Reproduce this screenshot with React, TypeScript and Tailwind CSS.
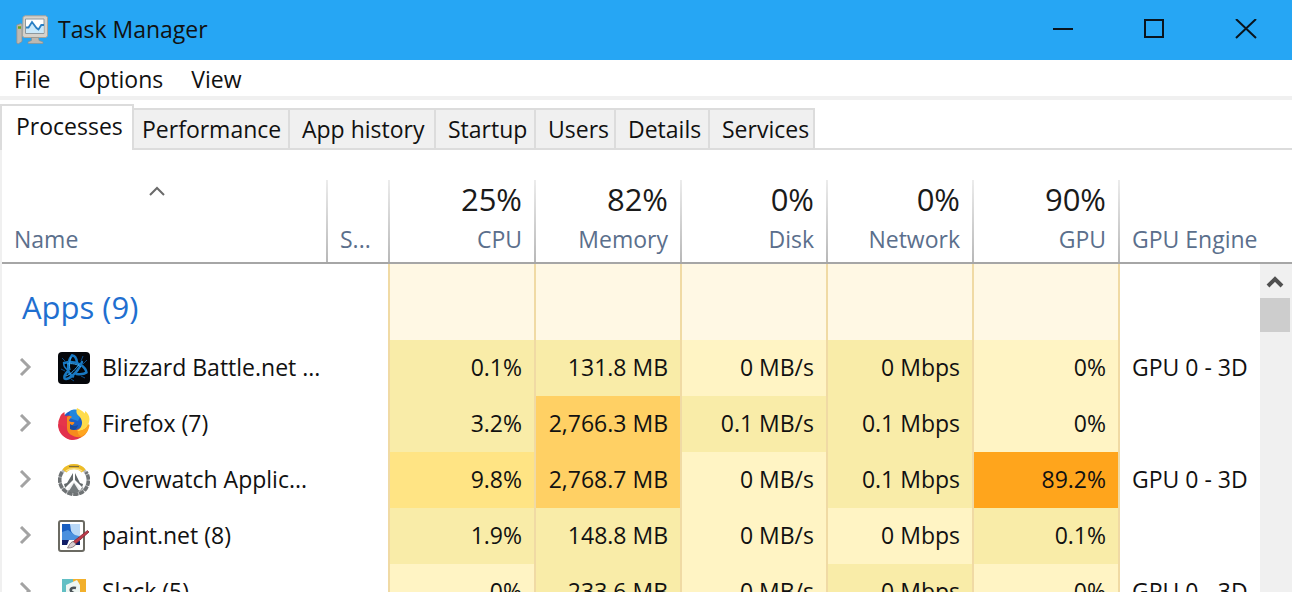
import { useState } from 'react';
import type { ReactNode } from 'react';
import clsx from 'clsx';

type Heat = 'low' | 'mild' | 'warm' | 'hot' | 'max';

type Cell = [string, Heat];

interface Process {
  name: string;
  icon: ReactNode;
  cells: Cell[];
  engine: string;
}

const HEAT: Record<Heat, string> = {
  low: 'bg-[#fff4c4]',
  mild: 'bg-[#f9eca8]',
  warm: 'bg-[#ffe484]',
  hot: 'bg-[#ffd064]',
  max: 'bg-[#ffa51c]',
};

const MENU = ['File', 'Options', 'View'];

const TABS = [
  { label: 'Performance', width: 'w-[156px]' },
  { label: 'App history', width: 'w-[146px]' },
  { label: 'Startup', width: 'w-[100px]' },
  { label: 'Users', width: 'w-[80px]' },
  { label: 'Details', width: 'w-[94px]' },
  { label: 'Services', width: 'w-[105px]' },
];

const METRICS = [
  { label: 'CPU', total: '25%' },
  { label: 'Memory', total: '82%' },
  { label: 'Disk', total: '0%' },
  { label: 'Network', total: '0%' },
  { label: 'GPU', total: '90%' },
];

function TaskManagerIcon() {
  return (
    <svg width="32" height="30" viewBox="0 0 32 30" aria-hidden="true">
      <path d="M.8 10 5 8.500l1 1v17L2 29l-1.200-1z" fill="#bdb9b2" stroke="#8f8f8f" strokeWidth=".8" />
      <path d="M2 12.500h3" stroke="#6fa51d" strokeWidth="2.500" />
      <path d="M7 2 9 .8h21l1.500 1.500V21L30 22.500H8L6.500 21z" fill="#d6d2cb" stroke="#a5a29b" />
      <path d="M9.500 4h18.500v14.500H9.500z" fill="#fff" stroke="#8d989e" />
      <path d="M10 13l3-.5 3-6 4 6 2.500 2 3-4.500 2 0v8H10z" fill="#c9e8fa" />
      <path d="M10 12.500h2.500L16 7l4.500 6 2 1.500 2.800-4.500H28" fill="none" stroke="#2a7fc4" strokeWidth="1.800" />
      <path d="M15.500 22.500h7l.5 3 4 1.500v1.500H12v-1.500l3.500-1.500z" fill="#bcb8b1" stroke="#908d87" strokeWidth=".6" />
    </svg>
  );
}

function BattleNetIcon() {
  return (
    <svg width="32" height="32" viewBox="0 0 32 32" aria-hidden="true">
      <rect width="32" height="32" rx="4" fill="#04060a" />
      <g fill="none" stroke="#1878c2" strokeLinejoin="round" strokeLinecap="round">
        <path d="M14 3.500c-2.500 3-4 9-4 13 0 3 2 6 5 8" strokeWidth="2.500" />
        <path d="M14 3.500c2.500 0 4.500 3 5 7" strokeWidth="2.500" />
        <path d="M6 11c5-1.500 12-1 16.500 1.500 3 2 5.500 5 6 8-2 1.500-6 2-10 1.500" strokeWidth="2.500" />
        <path d="M24 10c-2 5-5 10-10 14-2.500 2-6 3.500-7.500 2.500-.5-2 1-5 3.500-7.500" strokeWidth="2.500" />
        <path d="M6 11c-1 2.500 1 5 4 7.500" strokeWidth="1.500" />
      </g>
      <path d="M13 5c-1.500 4-2 9-1 13M9 12c5-1 10 0 14 3M8 24c5-2 10-7 13-12" fill="none" stroke="#38a5ee" />
      <path d="M25 4l-2 5M29 8l-4 4M3 17l4 2M27 26l-4-2M16 29l-3-2M4 6l3 3" stroke="#0c4f8c" />
    </svg>
  );
}

function FirefoxIcon() {
  return (
    <svg width="32" height="32" viewBox="0 0 32 32" aria-hidden="true">
      <circle cx="17" cy="15" r="13" fill="#1b5fc4" />
      <path d="M12 3c5-3 11-1 12 2l-4 8-9-3z" fill="#1f86dd" />
      <path d="M2 9c1-3 3-4 4.500-5 0 2 0 3 1 4 2-1 4-.5 6 .5-2 1.500-3 3-2 5 1 .8 3 .5 4 1-1 2.500-3 3-3.500 5 1.500 3 6 3.500 9 1 1 4-1 10-6 11C6 32-1 22 .5 13z" fill="#e5354a" />
      <path d="M9 9c2-1.500 4-1 5 0-1.500 1-3 2-3 4 1.500 1.500 4 .5 5.500 1.500-1 3-4 2.500-4 5 2 4 8 3 11-.5 2-3 1.500-7-1-10 6 1 9 8 7 14-3 7-11 9-16 7C11 28 9 24 9 20z" fill="#f58a1d" />
      <path d="M0 16c0 9 6 15 14 16 4 0 7-1 9-3-7 1-14-3-15-10z" fill="#e2304c" />
      <path d="M12 16c3 2 5 3 8 1-1 5-5 6-8 4z" fill="#174a9e" />
      <path d="M19 0c-1 3-1 6 2 8 3 3 4 7 2 11-1 2-3 3-4 4 5 0 9-2 11-6 3-7 1-11-3-14 0 1 0 2-.5 2.500C25 3 22 2 19 0z" fill="#ffdc4c" />
      <path d="M30.500 16c-2 5-6 7-11 7 0 3 2 5 4 5 5-2 7.500-6 8-11z" fill="#ffa51f" />
    </svg>
  );
}

function OverwatchIcon() {
  return (
    <svg width="32" height="32" viewBox="0 0 32 32" fill="none" aria-hidden="true">
      <circle cx="16" cy="16" r="14" stroke="#b8bbbd" strokeWidth="3" />
      <path d="M4 8C0 14 1 22 7 27s14 4 19 0c5-5 6-13 2-19" stroke="#6f7375" strokeWidth="3.500" strokeDasharray="5 1" />
      <path d="M6.500 7C11 1 21 1 25.500 7" stroke="#eebd27" strokeWidth="5" />
      <path d="M11 2.500h10" stroke="#7d6c3e" strokeWidth="1.200" />
      <path d="M8 7c4-3 12-3 16 0" stroke="#f9e08a" strokeWidth="1.500" />
      <path d="M15 9v7l-8 8 3 3 6-6 6 6 3-3-8-8V9l5 10 3 1c-1 6-5 9-9 9s-9-3-10-9l3-1z" fill="#63696b" />
      <path d="M16 17.500 9.500 25c4 3.500 9 3.500 13 0z" fill="#f0f1f1" />
      <path d="M16 19l-5 8c3 2 7 2 10 0z" fill="#747a7c" />
    </svg>
  );
}

function PaintNetIcon() {
  return (
    <svg width="32" height="32" viewBox="0 0 32 32" aria-hidden="true">
      <rect x="1" y="1" width="25" height="30" rx="2" fill="#fff" stroke="#6b6a62" strokeWidth="2" />
      <path d="M4 4h8l4 3 5 3v10H4z" fill="#1a5fc0" />
      <path d="M12 4h10v14l-5-1-4-6z" fill="#b9d8f6" />
      <path d="M4 12l6-2 7 5 4 1v4H4z" fill="#4a90de" />
      <path d="M4 20h7l-2 5H4zM14 22l8-1v4H12z" fill="#101c66" />
      <path d="M29.500 10.500 16 21l-5 6 7-3.500L31 12z" fill="#c13a4a" stroke="#7c2430" strokeWidth=".8" />
      <path d="M15 21.500c-3 1-4 4-5.500 6.500 4 0 7-1 8.500-4z" fill="#d7cdd0" stroke="#786a70" strokeWidth=".8" />
    </svg>
  );
}

function SlackIcon() {
  return (
    <svg width="32" height="32" viewBox="0 0 32 32" aria-hidden="true">
      <path d="M4 3h11v13H4z" fill="#62bfc4" />
      <path d="M15 3h13v13H15z" fill="#f2b02c" />
      <path d="M4 16h12v13H4z" fill="#8fc65b" />
      <path d="M16 16h12v13H16z" fill="#d8436d" />
      <path d="M8 9 19 4l3 5v15H8z" fill="#eef6f2" />
      <path d="M18 12c-4-1-6 1-5 3s6 2 5 5-5 2-6 0" fill="none" stroke="#4b5358" strokeWidth="2.500" />
    </svg>
  );
}

const PROCESSES: Process[] = [
  {
    name: 'Blizzard Battle.net ...',
    icon: <BattleNetIcon />,
    cells: [['0.1%', 'mild'], ['131.8 MB', 'mild'], ['0 MB/s', 'low'], ['0 Mbps', 'mild'], ['0%', 'low']],
    engine: 'GPU 0 - 3D',
  },
  {
    name: 'Firefox (7)',
    icon: <FirefoxIcon />,
    cells: [['3.2%', 'mild'], ['2,766.3 MB', 'hot'], ['0.1 MB/s', 'mild'], ['0.1 Mbps', 'mild'], ['0%', 'low']],
    engine: '',
  },
  {
    name: 'Overwatch Applic...',
    icon: <OverwatchIcon />,
    cells: [['9.8%', 'warm'], ['2,768.7 MB', 'hot'], ['0 MB/s', 'low'], ['0.1 Mbps', 'mild'], ['89.2%', 'max']],
    engine: 'GPU 0 - 3D',
  },
  {
    name: 'paint.net (8)',
    icon: <PaintNetIcon />,
    cells: [['1.9%', 'mild'], ['148.8 MB', 'mild'], ['0 MB/s', 'low'], ['0 Mbps', 'low'], ['0.1%', 'mild']],
    engine: '',
  },
  {
    name: 'Slack (5)',
    icon: <SlackIcon />,
    cells: [['0%', 'low'], ['233.6 MB', 'mild'], ['0 MB/s', 'low'], ['0 Mbps', 'mild'], ['0%', 'low']],
    engine: 'GPU 0 - 3D',
  },
];

const DIVIDER = 'bg-[linear-gradient(#ececec,#b8b8b8)] bg-[length:2px_100%] bg-right bg-no-repeat';
const HEAD_CELL = 'h-[84px] border-b-2 border-[#a6a6a6] p-0 align-top font-normal';

function TitleBar() {
  return (
    <header className="flex h-[60px] shrink-0 items-center bg-[#26a6f4] pl-4">
      <TaskManagerIcon />
      <h1 className="ml-[10px] flex-1 pb-[2px]">Task Manager</h1>
      <button aria-label="Minimize" className="flex h-full w-[92px] items-center justify-center">
        <svg width="22" height="22" viewBox="0 0 22 22" stroke="#0a141c" strokeWidth="2">
          <path d="M2 10h20" />
        </svg>
      </button>
      <button aria-label="Maximize" className="flex h-full w-[92px] items-center justify-center">
        <svg width="22" height="22" viewBox="0 0 22 22" fill="none" stroke="#0a141c" strokeWidth="2">
          <path d="M2 1h18v17H2z" />
        </svg>
      </button>
      <button aria-label="Close" className="flex h-full w-[92px] items-center justify-center">
        <svg width="22" height="22" viewBox="0 0 22 22" stroke="#0a141c" strokeWidth="2">
          <path d="M1 0l20 19M21 0 1 19" />
        </svg>
      </button>
    </header>
  );
}

function Tabs() {
  return (
    <div role="tablist" className="flex h-[50px] shrink-0 items-end">
      <button
        role="tab"
        aria-selected="true"
        className="flex h-[46px] w-[134px] border-2 border-b-0 border-[#dcdcdc] pl-[14px] text-left leading-10"
      >
        Processes
      </button>
      {/* inactive tabs sit 4px lower and carry the strip's bottom rule */}
      <div className="flex flex-1 border-b-2 border-[#dcdcdc]">
        {TABS.map((tab, i) => (
          <button
            key={tab.label}
            role="tab"
            aria-selected="false"
            className={clsx(
              'h-10 border-t-2 border-r-2 border-[#dcdcdc] bg-[#f0f0f0] text-left',
              i === 0 ? 'pl-2' : 'pl-3',
              tab.width,
            )}
          >
            {tab.label}
          </button>
        ))}
      </div>
    </div>
  );
}

function ProcessRow({ process }: { process: Process }) {
  const [open, setOpen] = useState(false);

  return (
    <tr className="h-14">
      <td className="p-0">
        <div className="flex items-center pl-4">
          <button
            aria-label={`Expand ${process.name}`}
            aria-expanded={open}
            onClick={() => setOpen(!open)}
            className="mr-[26px]"
          >
            <svg width="14" height="20" viewBox="0 0 14 20" fill="none" stroke="#a3a3a3" strokeWidth="3">
              <path d="M3 1 11 9 3 17" />
            </svg>
          </button>
          {process.icon}
          <span className="ml-3 truncate pb-[2px]">{process.name}</span>
        </div>
      </td>
      <td className="border-r-2 border-[#f0daa4] p-0" />
      {process.cells.map(([value, heat], i) => (
        <td key={i} className={clsx('border-r-2 border-[#f0daa4] p-0 pr-3 pb-[2px] text-right', HEAT[heat])}>
          {value}
        </td>
      ))}
      <td className="p-0 pb-[2px] pl-3">{process.engine}</td>
    </tr>
  );
}

function ProcessTable() {
  return (
    <table className="w-full table-fixed border-separate border-spacing-0 whitespace-nowrap">
      <colgroup>
        <col className="w-[326px]" />
        <col className="w-[62px]" />
        {METRICS.map((m) => (
          <col key={m.label} className="w-[146px]" />
        ))}
        <col />
      </colgroup>
      <thead className="text-[#5b6f8c]">
        <tr>
          <th aria-sort="ascending" className={clsx(HEAD_CELL, DIVIDER)}>
            <button className="block w-full text-left">
              <span className="flex h-[38px] justify-center pr-4">
                <svg width="18" height="20" viewBox="0 0 18 20" fill="none" stroke="#6a6a6a" strokeWidth="2">
                  <path d="M2 15 9 8l7 7" />
                </svg>
              </span>
              <span className="block pl-3 leading-[42px]">Name</span>
            </button>
          </th>
          <th className={clsx(HEAD_CELL, DIVIDER)}>
            <button className="block w-full pt-[38px] pl-3 text-left leading-[42px]">S...</button>
          </th>
          {METRICS.map((m) => (
            <th key={m.label} className={clsx(HEAD_CELL, DIVIDER)}>
              <button className="block w-full pr-[14px] text-right">
                <span className="block text-[31px] leading-[38px] text-[#1a1a1a]">{m.total}</span>
                <span className="block leading-[42px]">{m.label}</span>
              </button>
            </th>
          ))}
          <th className={HEAD_CELL}>
            <button className="block w-full pt-[38px] pl-3 text-left leading-[42px]">GPU Engine</button>
          </th>
        </tr>
      </thead>
      <tbody>
        <tr className="h-[76px]">
          <th scope="rowgroup" className="p-0 pt-[10px] pl-5 text-left text-[31px] font-normal text-[#1f6fd0]">
            Apps (9)
          </th>
          <td className="border-r-2 border-[#f0daa4] p-0" />
          {METRICS.map((m) => (
            <td key={m.label} className="border-r-2 border-[#f0daa4] bg-[#fff8e4] p-0" />
          ))}
          <td className="p-0" />
        </tr>
        {PROCESSES.map((p) => (
          <ProcessRow key={p.name} process={p} />
        ))}
      </tbody>
    </table>
  );
}

export default function App() {
  return (
    <div className="flex h-screen flex-col overflow-hidden bg-white font-['Open_Sans',sans-serif] text-[23px] leading-8 text-[#111]">
      <TitleBar />
      <nav className="flex h-10 shrink-0 items-center gap-7 border-b-4 border-[#f0f0f0] pt-[2px] pl-[14px]">
        {MENU.map((item) => (
          <button key={item}>{item}</button>
        ))}
      </nav>
      <Tabs />
      <main className="relative min-h-0 flex-1 overflow-hidden border-l-2 border-[#f0f0f0] pt-[30px]">
        <ProcessTable />
        {/* scrollbar floats over the last column, under the header rule */}
        <div className="absolute top-[114px] right-0 bottom-0 w-8 bg-[#f0f0f0] pr-[2px]">
          <button aria-label="Scroll up" className="flex h-[34px] w-full items-center justify-center">
            <svg width="18" height="16" viewBox="0 0 18 16" fill="none" stroke="#505050" strokeWidth="4">
              <path d="M2 13 9 6l7 7" />
            </svg>
          </button>
          <div className="h-[34px] bg-[#cdcdcd]" />
        </div>
      </main>
    </div>
  );
}
